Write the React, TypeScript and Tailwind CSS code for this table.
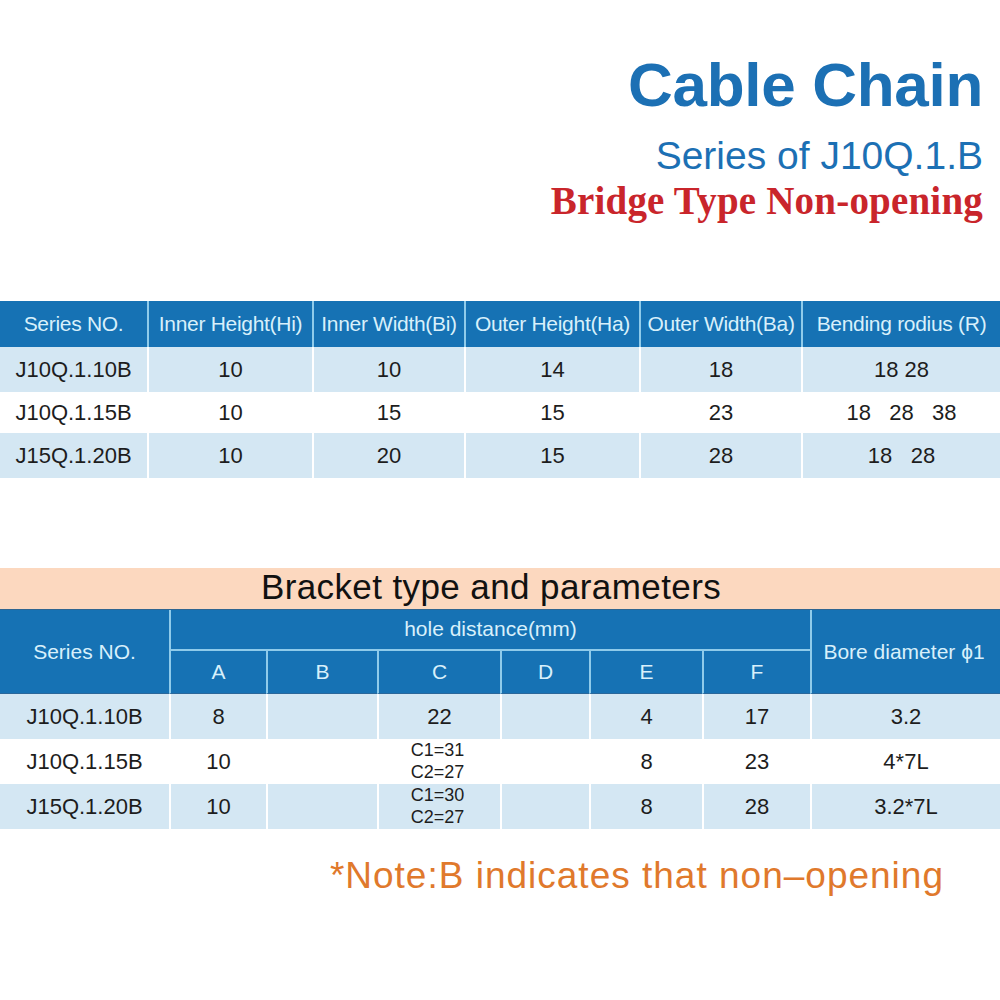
import React from "react";

const sans = { fontFamily: '"Liberation Sans", Arial, sans-serif' };

const specs = [
  { s: "J10Q.1.10B", hi: "10", bi: "10", ha: "14", ba: "18", r: "18 28", h: "h-[45px]", light: true },
  { s: "J10Q.1.15B", hi: "10", bi: "15", ha: "15", ba: "23", r: "18   28   38", h: "h-[41px]", light: false },
  { s: "J15Q.1.20B", hi: "10", bi: "20", ha: "15", ba: "28", r: "18   28", h: "h-[45px]", light: true },
];

const brackets = [
  { s: "J10Q.1.10B", a: "8", c: ["22"], e: "4", f: "17", bore: "3.2", light: true },
  { s: "J10Q.1.15B", a: "10", c: ["C1=31", "C2=27"], e: "8", f: "23", bore: "4*7L", light: false },
  { s: "J15Q.1.20B", a: "10", c: ["C1=30", "C2=27"], e: "8", f: "28", bore: "3.2*7L", light: true },
];

const head = "flex items-center justify-center bg-[#1672b4] text-[#d8f0fb] text-[21px]";
const cell = "flex items-center justify-center text-[22px] text-[#1d1d1d]";

function SpecTable() {
  const cols = ["Series NO.", "Inner Height(Hi)", "Inner Width(Bi)", "Outer Height(Ha)", "Outer Width(Ba)", "Bending rodius (R)"];
  return (
    <div className="grid grid-cols-[147px_165px_152px_175px_162px_1fr]">
      {cols.map((c, i) => (
        <div key={c} className={`${head} h-[46px] whitespace-nowrap tracking-[-0.3px] ${i > 0 ? "border-l-2 border-[#8fcbea]" : ""}`}>
          {c}
        </div>
      ))}
      {specs.map((r) =>
        [r.s, r.hi, r.bi, r.ha, r.ba, r.r].map((v, i) => (
          <div
            key={r.s + i}
            className={`${cell} ${r.h} whitespace-pre ${r.light ? "bg-[#d4e7f3]" : "bg-white"} ${i > 0 ? "border-l-2 border-white" : ""}`}
          >
            {v}
          </div>
        ))
      )}
    </div>
  );
}

function BracketTable() {
  return (
    <div>
      <div className="h-[41px] bg-[#fcd8bf] flex items-center justify-center pb-[2px]">
        <span className="text-[35px] text-[#111] tracking-[0.4px] ml-[-18px]">Bracket type and parameters</span>
      </div>
      <div className="grid grid-cols-[169px_97px_111px_123px_89px_113px_108px_1fr] grid-rows-[41px_43px_45px_45px_45px] border-t border-[#2f6590]">
        <div className={`${head} row-span-2 border-b border-[#2a679a]`}>Series NO.</div>
        <div className={`${head} col-span-6 border-l-2 border-b-2 border-[#8fcbea] pb-[2px]`}>hole distance(mm)</div>
        <div className={`${head} row-span-2 border-l-2 border-[#8fcbea] border-b-[#2a679a] border-b pr-[4px]`}>Bore diameter ϕ1</div>
        {["A", "B", "C", "D", "E", "F"].map((l) => (
          <div key={l} className={`${head} border-l-2 border-[#8fcbea] border-b border-b-[#2a679a]`}>
            {l}
          </div>
        ))}
        {brackets.map((r) =>
          [r.s, r.a, "", r.c, "", r.e, r.f, r.bore].map((v, i) => (
            <div
              key={r.s + i}
              className={`${cell} ${r.light ? "bg-[#d4e7f3]" : "bg-white"} ${i > 0 ? "border-l-2 border-white" : ""}`}
            >
              {Array.isArray(v) ? (
                v.length > 1 ? (
                  <div className="flex flex-col items-center text-[18px] leading-[22px] mt-[-2px] mr-[4px]">
                    {v.map((t) => (
                      <span key={t}>{t}</span>
                    ))}
                  </div>
                ) : (
                  v[0]
                )
              ) : (
                v
              )}
            </div>
          ))
        )}
      </div>
    </div>
  );
}

export default function App() {
  return (
    <div className="w-[1000px] h-[1000px] bg-white overflow-hidden" style={sans}>
      <div className="flex flex-col items-end pr-[17px] pt-[54px]">
        <div className="text-[62px] leading-[62px] font-bold text-[#1c70b4] tracking-[-0.3px]">Cable Chain</div>
        <div className="text-[39px] leading-[39px] text-[#1c70b4] mt-[20px]">Series of J10Q.1.B</div>
        <div
          className="text-[39px] leading-[39px] font-bold text-[#c9252b] mt-[6px] tracking-[0.2px]"
          style={{ fontFamily: '"Liberation Serif", "Times New Roman", serif' }}
        >
          Bridge Type Non-opening
        </div>
      </div>
      <div className="mt-[81px]">
        <SpecTable />
      </div>
      <div className="mt-[90px]">
        <BracketTable />
      </div>
      <div className="flex justify-end pr-[56px] mt-[27px]">
        <span className="text-[37px] leading-[40px] text-[#e0792c] tracking-[1px]">*Note:B indicates that non–opening</span>
      </div>
    </div>
  );
}
